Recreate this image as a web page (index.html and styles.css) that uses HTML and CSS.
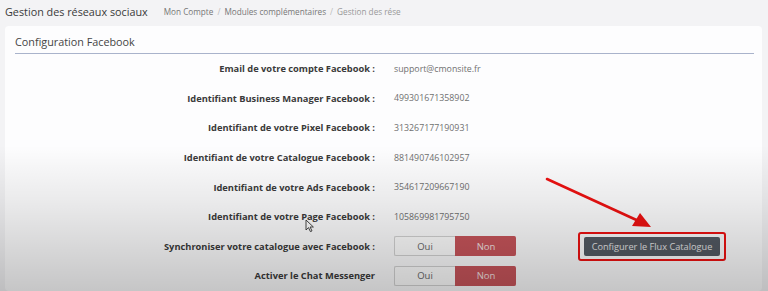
FILE: index.html
```html
<!DOCTYPE html>
<html lang="fr">
<head>
  <meta charset="UTF-8">
  <title>Gestion des réseaux sociaux</title>
  <link rel="stylesheet" href="styles.css">
</head>
<body>
  <!-- Page title + breadcrumb -->
  <div class="page-head">
    <h1>Gestion des réseaux sociaux</h1>
    <ul class="breadcrumb">
      <li>Mon Compte</li>
      <li>Modules complémentaires</li>
      <li class="faded">Gestion des rése</li>
    </ul>
  </div>

  <!-- Facebook settings card -->
  <section class="card">
    <div class="card-title">Configuration Facebook</div>
    <div class="form">
      <div class="row">
        <div class="label">Email de votre compte Facebook :</div>
        <div class="value">support@cmonsite.fr</div>
      </div>
      <div class="row">
        <div class="label">Identifiant Business Manager Facebook :</div>
        <div class="value">499301671358902</div>
      </div>
      <div class="row">
        <div class="label">Identifiant de votre Pixel Facebook :</div>
        <div class="value">313267177190931</div>
      </div>
      <div class="row">
        <div class="label">Identifiant de votre Catalogue Facebook :</div>
        <div class="value">881490746102957</div>
      </div>
      <div class="row">
        <div class="label">Identifiant de votre Ads Facebook :</div>
        <div class="value">354617209667190</div>
      </div>
      <div class="row">
        <div class="label">Identifiant de votre Page Facebook :</div>
        <div class="value">105869981795750</div>
      </div>
      <div class="row">
        <div class="label">Synchroniser votre catalogue avec Facebook :</div>
        <div class="value with-action">
          <div class="toggle">
            <span class="opt">Oui</span>
            <span class="opt on">Non</span>
          </div>
          <div class="highlight">
            <button class="btn-dark">Configurer le Flux Catalogue</button>
          </div>
        </div>
      </div>
      <div class="row">
        <div class="label">Activer le Chat Messenger</div>
        <div class="value">
          <div class="toggle">
            <span class="opt">Oui</span>
            <span class="opt on">Non</span>
          </div>
        </div>
      </div>
    </div>
  </section>

  <!-- annotation arrow drawn over the video frame -->
  <svg class="annot-arrow" width="120" height="60" viewBox="0 0 120 60">
    <line x1="2" y1="2" x2="98" y2="46" stroke="#ee1111" stroke-width="2.6" stroke-linecap="round"/>
    <polygon points="106,50 87,49 95,36" fill="#ee1111"/>
  </svg>

  <!-- mouse pointer -->
  <svg class="pointer" width="10" height="14" viewBox="0 0 10 14">
    <path d="M1 1 L1 11 L3.5 8.6 L5.4 12.6 L7 11.9 L5.1 8 L8.4 8 Z" fill="#fff" stroke="#333" stroke-width="0.9" stroke-linejoin="round"/>
  </svg>

  <div class="vignette"></div>
</body>
</html>
```

FILE: styles.css
```css
* {
  margin: 0;
  padding: 0;
  box-sizing: border-box;
}

body {
  font-family: 'Open Sans', 'Noto Sans', sans-serif;
  background: #f3f3f5;
  color: #333;
  width: 768px;
  height: 291px;
  overflow: hidden;
  position: relative;
  padding: 0 6px 0 5px;
}

/* header */
.page-head {
  height: 26px;
  display: flex;
  align-items: center;
  gap: 16px;
  padding-bottom: 3px;
}

.page-head h1 {
  font-size: 10.8px;
  font-weight: 400;
  color: #3a3a3a;
  white-space: nowrap;
}

.breadcrumb {
  list-style: none;
  display: flex;
  font-size: 8.2px;
  color: #777;
  white-space: nowrap;
}

.breadcrumb li + li::before {
  content: "/";
  color: #bbb;
  padding: 0 4px;
}

.breadcrumb .faded {
  color: #999;
}

/* card */
.card {
  background: #fdfdfe;
  border-radius: 4px;
  padding: 0 8px 0 10px;
  height: 265px;
}

.card-title {
  font-size: 10.8px;
  color: #444;
  padding: 8px 0 4px;
  border-bottom: 1.5px solid #a9b3cb;
}

.row {
  display: grid;
  grid-template-columns: 360px 1fr;
  column-gap: 19px;
  align-items: center;
  height: 29.6px;
}

.label {
  text-align: right;
  font-weight: 700;
  font-size: 9.3px;
  color: #3a3a3a;
}

.value {
  font-size: 8.8px;
  color: #707070;
}

.with-action {
  display: flex;
  align-items: center;
  gap: 62px;
}

/* Oui / Non toggle */
.toggle {
  display: flex;
  width: 122px;
  height: 20px;
}

.opt {
  flex: 1;
  display: flex;
  align-items: center;
  justify-content: center;
  font-size: 9.5px;
  color: #666;
  background: #fff;
  border: 1px solid #d3d3d3;
  border-right: none;
  border-radius: 2px 0 0 2px;
}

.opt.on {
  background: #c8555b;
  border-color: #c8555b;
  color: #f4e4e4;
  border-radius: 0 2px 2px 0;
}

/* highlighted button */
.highlight {
  border: 2px solid #ee1111;
  border-radius: 3px;
  padding: 3px 4px;
}

.btn-dark {
  display: block;
  font-family: inherit;
  font-size: 9.2px;
  color: #e6e6e6;
  background: #535a63;
  border: none;
  border-radius: 2px;
  padding: 0 6px;
  height: 19px;
  width: 136px;
  white-space: nowrap;
}

/* overlays */
.annot-arrow {
  position: absolute;
  left: 545px;
  top: 177px;
}

.pointer {
  position: absolute;
  left: 305px;
  top: 219px;
}

.vignette {
  position: absolute;
  inset: 0;
  pointer-events: none;
  background: linear-gradient(to bottom, rgba(0, 0, 0, 0) 0%, rgba(0, 0, 0, 0) 50%, rgba(0, 0, 0, 0.08) 70%, rgba(0, 0, 0, 0.22) 100%);
}
```
